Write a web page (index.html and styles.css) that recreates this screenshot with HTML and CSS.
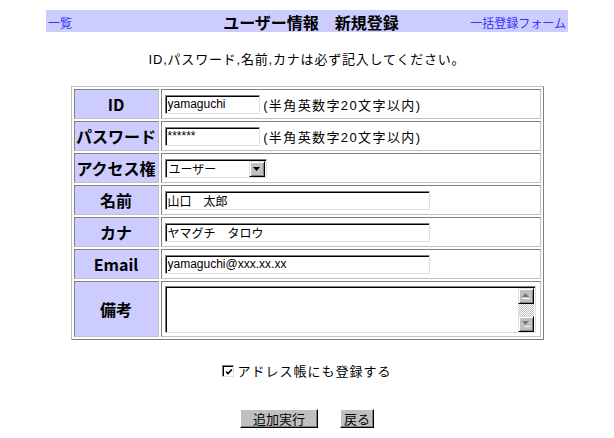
FILE: index.html
```html
<!DOCTYPE html>
<html lang="ja">
<head>
    <meta charset="UTF-8">
    <title>ユーザー情報 新規登録</title>
    <link rel="stylesheet" href="styles.css">
</head>
<body>
    <div class="page">
        <div class="topbar">
            <a href="#" class="back">一覧</a>
            <span class="title">ユーザー情報　新規登録</span>
            <a href="#" class="bulk">一括登録フォーム</a>
        </div>

        <p class="note">ID,パスワード,名前,カナは必ず記入してください。</p>

        <form>
            <table class="entry">
                <tr>
                    <td class="label">ID</td>
                    <td class="value"><input type="text" class="field short" value="yamaguchi"> <span class="hint">(半角英数字20文字以内)</span></td>
                </tr>
                <tr>
                    <td class="label">パスワード</td>
                    <td class="value"><input type="text" class="field short" value="******"> <span class="hint">(半角英数字20文字以内)</span></td>
                </tr>
                <tr>
                    <td class="label">アクセス権</td>
                    <td class="value">
                        <span class="select">
                            <select><option>ユーザー</option><option>管理者</option></select>
                            <span class="drop">
                                <svg width="7" height="4" viewBox="0 0 7 4"><path d="M0 0h7L3.5 4z" fill="#000"/></svg>
                            </span>
                        </span>
                    </td>
                </tr>
                <tr>
                    <td class="label">名前</td>
                    <td class="value"><input type="text" class="field wide" value="山口　太郎"></td>
                </tr>
                <tr>
                    <td class="label">カナ</td>
                    <td class="value"><input type="text" class="field wide" value="ヤマグチ　タロウ"></td>
                </tr>
                <tr>
                    <td class="label">Email</td>
                    <td class="value"><input type="text" class="field wide" value="yamaguchi@xxx.xx.xx"></td>
                </tr>
                <tr class="memo-row">
                    <td class="label">備考</td>
                    <td class="value">
                        <div class="memo">
                            <textarea></textarea>
                            <div class="vscroll">
                                <span class="sbtn">
                                    <svg width="9" height="6" viewBox="0 0 9 6"><path d="M4.5 0L8 4H1z" fill="#7a7a7a"/><path d="M1 5.5h8" stroke="#fff"/></svg>
                                </span>
                                <span class="track"></span>
                                <span class="sbtn">
                                    <svg width="9" height="6" viewBox="0 0 9 6"><path d="M1 0h7L4.5 4z" fill="#7a7a7a"/><path d="M4 5.5h5" stroke="#fff"/></svg>
                                </span>
                            </div>
                        </div>
                    </td>
                </tr>
            </table>

            <p class="addr">
                <span class="check">
                    <svg width="8" height="8" viewBox="0 0 8 8"><path d="M1 3.5l2 2 4-4" fill="none" stroke="#000" stroke-width="1.6"/></svg>
                </span>
                アドレス帳にも登録する
            </p>

            <div class="actions">
                <button type="button" class="btn main">追加実行</button>
                <button type="button" class="btn">戻る</button>
            </div>
        </form>
    </div>
</body>
</html>
```

FILE: styles.css
```css
body {
    margin: 0;
    background: #fff;
    color: #000;
    font-family: "Liberation Sans", "Noto Sans CJK JP", sans-serif;
    font-size: 13px;
}
.page {
    width: 522px;
    margin: 10px auto 0;
}
.topbar {
    display: grid;
    grid-template-columns: 1fr auto 1fr;
    align-items: center;
    height: 22px;
    padding: 0 2px;
    background: #ccccff;
    font-family: "Noto Sans CJK JP", sans-serif;
    font-size: 12px;
}
.topbar a {
    color: #3333ff;
    text-decoration: none;
}
.topbar .back {
    justify-self: start;
}
.topbar .bulk {
    justify-self: end;
}
.topbar .title {
    font-size: 16px;
    font-weight: bold;
    padding-left: 8px;
}
.note {
    margin: 20px 0 18px;
    line-height: 16px;
    text-align: center;
    letter-spacing: 0.8px;
}
form {
    margin: 0;
}
.entry {
    margin: 0 auto;
    width: 473px;
    border: 1px solid;
    border-color: #c0c0c0 #808080 #808080 #c0c0c0;
    border-spacing: 2px;
}
.entry td {
    box-sizing: border-box;
    height: 30px;
    padding: 0 3px;
    border: 1px solid;
    border-color: #808080 #c0c0c0 #c0c0c0 #808080;
    vertical-align: middle;
}
.entry .label {
    width: 85px;
    padding: 0 1px;
    background: #ccccff;
    text-align: center;
    font-family: "Noto Sans CJK JP", sans-serif;
    font-size: 16px;
    font-weight: bold;
}
.entry .memo-row td {
    height: 56px;
}
.field {
    box-sizing: border-box;
    height: 19px;
    margin: 0;
    padding: 0 2px;
    border: 1px solid;
    border-color: #808080 #dfdfdf #dfdfdf #808080;
    box-shadow: inset 1px 1px 0 #000;
    font-family: "Liberation Sans", "Noto Sans CJK JP", sans-serif;
    font-size: 12px;
    vertical-align: middle;
    outline: none;
}
.field.short {
    width: 95px;
}
.field.wide {
    width: 265px;
}
.hint {
    vertical-align: middle;
    letter-spacing: 1.4px;
}
.select {
    display: inline-flex;
    align-items: center;
    box-sizing: border-box;
    width: 102px;
    height: 19px;
    padding: 1px 1px 0 1px;
    border: 1px solid;
    border-color: #808080 #dfdfdf #dfdfdf #808080;
    box-shadow: inset 1px 1px 0 #000;
    background: #fff;
    vertical-align: middle;
}
.select select {
    flex: 1;
    min-width: 0;
    appearance: none;
    border: 0;
    padding: 0 2px;
    background: transparent;
    font-family: "Noto Sans CJK JP", sans-serif;
    font-size: 12px;
    outline: none;
}
.drop,
.sbtn {
    display: flex;
    align-items: center;
    justify-content: center;
    flex: none;
    box-sizing: border-box;
    width: 16px;
    background: #c0c0c0;
    border: 1px solid;
    border-color: #dfdfdf #000 #000 #dfdfdf;
    box-shadow: inset 1px 1px 0 #fff, inset -1px -1px 0 #808080;
}
.drop {
    height: 16px;
}
.memo {
    display: flex;
    box-sizing: border-box;
    width: 371px;
    height: 47px;
    padding: 1px 0 0 1px;
    border: 1px solid;
    border-color: #808080 #dfdfdf #dfdfdf #808080;
    box-shadow: inset 1px 1px 0 #000;
    background: #fff;
}
.memo textarea {
    flex: 1;
    min-width: 0;
    margin: 0;
    padding: 2px;
    border: 0;
    background: transparent;
    resize: none;
    outline: none;
    font-family: "Liberation Sans", "Noto Sans CJK JP", sans-serif;
    font-size: 12px;
}
.vscroll {
    display: flex;
    flex: none;
    flex-direction: column;
    width: 16px;
    margin-right: 1px;
}
.sbtn {
    height: 16px;
}
.track {
    flex: 1;
    background: repeating-conic-gradient(#c0c0c0 0 25%, #fff 0 50%) 0 0 / 2px 2px;
}
.addr {
    display: flex;
    justify-content: center;
    align-items: center;
    gap: 3px;
    margin: 23px 0 0;
    line-height: 16px;
    letter-spacing: 1px;
    font-family: "Noto Sans CJK JP", sans-serif;
}
.check {
    display: flex;
    align-items: center;
    justify-content: center;
    box-sizing: border-box;
    width: 12px;
    height: 12px;
    padding: 1px 0 0 1px;
    border: 1px solid;
    border-color: #808080 #dfdfdf #dfdfdf #808080;
    box-shadow: inset 1px 1px 0 #000;
    background: #fff;
}
.actions {
    display: flex;
    justify-content: center;
    gap: 22px;
    margin-top: 30px;
}
.btn {
    box-sizing: border-box;
    height: 19px;
    padding: 0 3px;
    background: #c0c0c0;
    border: 1px solid;
    border-color: #fff #000 #000 #fff;
    box-shadow: inset -1px -1px 0 #808080;
    font-family: "Noto Sans CJK JP", sans-serif;
    font-size: 13px;
    line-height: 15px;
}
.btn.main {
    padding: 0 12px;
}
```
